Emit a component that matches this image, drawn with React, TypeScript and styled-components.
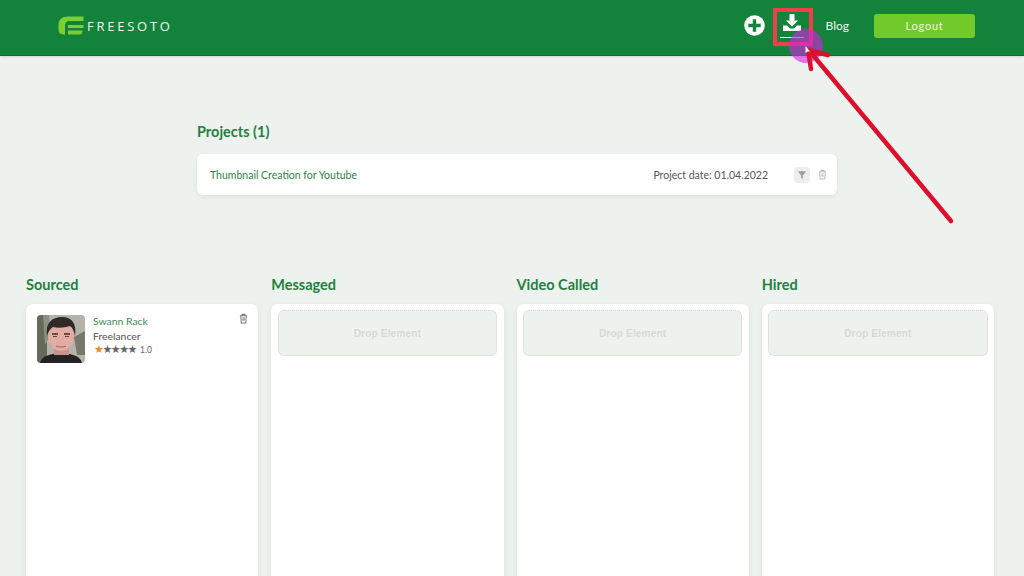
import React from "react";
import styled, { createGlobalStyle } from "styled-components";

const Global = createGlobalStyle`
  html, body { margin: 0; padding: 0; background: #eef2ef; height: 576px; overflow: hidden; }
  body { font-family: Lato, "Open Sans", sans-serif; }
  * { box-sizing: border-box; }
`;
const Page = styled.div`position: relative; width: 1024px; height: 576px; overflow: hidden; background: #eef2ef;`;
const Header = styled.header`
  height: 56px; background: #13823b; border-bottom: 1px solid #0f6f31;
  display: flex; align-items: center; padding: 0 49px 4px 58px;
  box-shadow: 0 1px 2px rgba(0,0,0,.12);
`;
const Brand = styled.div`display: flex; align-items: center; gap: 3px;`;
const BrandName = styled.span`
  color: #f2f7f3; font-family: "Open Sans", Roboto, sans-serif; font-size: 13px; font-weight: 500;
  letter-spacing: 2.75px; line-height: 16px;
`;
const Nav = styled.nav`margin-left: auto; display: flex; align-items: center;`;
const PlusIcon = styled.svg`width: 21px; height: 21px; display: block; margin-right: 10px;`;
const DownloadWrap = styled.div`
  width: 34px; height: 34px; display: flex; flex-direction: column; align-items: center; margin-top: 2px; margin-right: 17px;
`;
const DownloadIcon = styled.svg`width: 20px; height: 20px; display: block; margin-top: 3px;`;
const Underline = styled.div`width: 24px; height: 1px; background: #e8f2ea; margin-top: 4px;`;
const BlogLink = styled.a`color: #eef6f0; font-size: 12px; font-weight: 400; margin-right: 25px;`;
const LogoutButton = styled.button`
  width: 101px; height: 24px; border: 0; border-radius: 3px; background: #72c92a; color: #eef7df;
  font: 400 11px Lato, sans-serif; letter-spacing: .8px; padding: 0;
`;
const Projects = styled.section`width: 640px; margin: 66px 0 0 197px;`;
const SectionTitle = styled.h2`margin: 0; color: #1f8140; font-size: 14.5px; font-weight: 700; line-height: 20px;`;
const ProjectCard = styled.div`
  margin-top: 12px; height: 41px; background: #fff; border-radius: 6px; padding: 0 9px 0 13px;
  display: flex; align-items: center; box-shadow: 0 2px 5px rgba(0,0,0,.07);
`;
const ProjectName = styled.span`color: #2f7f49; font-size: 10.5px;`;
const ProjectDate = styled.span`margin-left: auto; color: #555; font-size: 10.5px; margin-right: 26px;`;
const FilterButton = styled.div`
  width: 16px; height: 16px; border-radius: 4px; background: #eceeed; display: flex; align-items: center; justify-content: center; margin-right: 7px;
`;
const SmallIcon = styled.svg`width: 10px; height: 10px; display: block;`;
const TrashIcon = styled.svg<{ $size: number }>`width: ${p => p.$size}px; height: ${p => p.$size}px; display: block;`;
const Board = styled.div`
  display: grid; grid-template-columns: repeat(4, 232.25px); column-gap: 13px; margin: 80px 0 0 26px;
`;
const Column = styled.div`display: flex; flex-direction: column;`;
const ColumnCard = styled.div`
  margin-top: 9px; height: 320px; background: #fff; border-radius: 7px; padding: 6px 6.5px;
  box-shadow: 0 2px 6px rgba(0,0,0,.07);
`;
const DropZone = styled.div`
  height: 46px; background: #eef2ef; border: 1px dotted #cfd5d1; border-radius: 6px; display: flex; align-items: center; justify-content: center;
  color: #d5dad7; font: 700 10.2px "Liberation Sans", Arial, sans-serif; letter-spacing: .1px;
`;
const Person = styled.div`position: relative; display: flex; padding: 5px 0 0 4.5px; gap: 8px;`;
const PhotoSvg = styled.svg`width: 48px; height: 48px; border-radius: 4px; display: block; flex: none;`;
const PersonText = styled.div`display: flex; flex-direction: column;`;
const PersonName = styled.span`color: #3f8b58; font-size: 10.4px; line-height: 13px;`;
const PersonRole = styled.span`color: #555; font-size: 10.4px; line-height: 13px; margin-top: 2px;`;
const Rating = styled.div`display: flex; align-items: center; margin-top: 2px; margin-left: 1px;`;
const Star = styled.span<{ $on?: boolean }>`color: ${p => (p.$on ? "#ef8a1e" : "#666")}; font: 11px/10px "DejaVu Sans", sans-serif; width: 8.4px; text-align: center;`;
const RatingValue = styled.span`color: #666; font-size: 8.5px; margin-left: 4px;`;
const PersonTrash = styled.div`position: absolute; top: 3px; right: 3px;`;
const Highlight = styled.div`position: absolute; left: 773px; top: 8px; width: 40px; height: 38px; border: 4px solid #ee4048;`;
const Overlay = styled.svg`position: absolute; left: 0; top: 0; width: 1024px; height: 576px; pointer-events: none;`;

const Trash = ({ size, color }: { size: number; color: string }) => (
  <TrashIcon $size={size} viewBox="0 0 24 24" fill="none" stroke={color} strokeWidth="2.2">
    <path d="M4 6h16M9 6V3h6v3M6 6l1 16h10l1-16" />
    <path d="M9 11h6M9 15h6" />
  </TrashIcon>
);

const columns = ["Messaged", "Video Called", "Hired"];

export default function App() {
  return (
    <Page>
      <Global />
      <Header>
        <Brand>
          <svg width="26" height="19" viewBox="0 0 26 19" fill="none">
            <path d="M25.5 0.5H10C4 0.5 0.5 3.5 0.5 9v5c0 3 2 4.5 6.5 4.5V10C7 7 8.5 5 11 5h14.5z" fill="#7ad02f" />
            <path d="M10 9h15.5v3H10zM10 14.5h14.5c0 2.5-1 4-3 4H10z" fill="#7ad02f" />
          </svg>
          <BrandName>FREESOTO</BrandName>
        </Brand>
        <Nav>
          <PlusIcon viewBox="0 0 22 22">
            <circle cx="11" cy="11" r="10.8" fill="#fff" />
            <path d="M11 4.5v13M4.5 11h13" stroke="#13823b" strokeWidth="3.6" />
          </PlusIcon>
          <DownloadWrap>
            <DownloadIcon viewBox="0 0 20 20" fill="#fff">
              <path d="M7.5 1h5v6.5h3.5L10 13.5 4 7.5h3.5z" />
              <path d="M1 12.5h4l3 3h4l3-3h4V18H1z" />
            </DownloadIcon>
            <Underline />
          </DownloadWrap>
          <BlogLink>Blog</BlogLink>
          <LogoutButton>Logout</LogoutButton>
        </Nav>
      </Header>
      <Projects>
        <SectionTitle>Projects (1)</SectionTitle>
        <ProjectCard>
          <ProjectName>Thumbnail Creation for Youtube</ProjectName>
          <ProjectDate>Project date: 01.04.2022</ProjectDate>
          <FilterButton>
            <SmallIcon viewBox="0 0 24 24" fill="#9aa09c"><path d="M2 3h20l-8 10v8l-4-2v-6z" /></SmallIcon>
          </FilterButton>
          <Trash size={11} color="#b9bebb" />
        </ProjectCard>
      </Projects>
      <Board>
        <Column>
          <SectionTitle>Sourced</SectionTitle>
          <ColumnCard>
            <Person>
              <PhotoSvg viewBox="0 0 48 48">
                <rect width="48" height="48" fill="#b4b2a9" />
                <rect width="10" height="48" fill="#666a5c" />
                <path d="M6 0l6 0 2 20-6 10z" fill="#8d9080" />
                <path d="M37 22l11-6v24H40z" fill="#77786b" />
                <path d="M3 48c2-8 11-9 21-10 10 1 19 2 21 10z" fill="#242222" />
                <rect x="17" y="27" width="15" height="13" fill="#c8938a" />
                <ellipse cx="24" cy="21" rx="13" ry="15" fill="#e0aca3" />
                <path d="M10 21C8 8 15 2 25 2c10 0 15 7 13 19-1-5-2-8-5-10-6 2-12 2-17 1-3 2-5 5-6 9z" fill="#2f2a28" />
                <path d="M15 19h6M27 19h6" stroke="#3c2e2a" strokeWidth="1.4" />
                <path d="M16 21.5h4M28 21.5h4" stroke="#5a4540" strokeWidth="1.2" />
                <path d="M19 31q5 2 10 0" stroke="#a8645e" strokeWidth="1.2" fill="none" />
              </PhotoSvg>
              <PersonText>
                <PersonName>Swann Rack</PersonName>
                <PersonRole>Freelancer</PersonRole>
                <Rating>
                  <Star $on>★</Star><Star>★</Star><Star>★</Star><Star>★</Star><Star>★</Star>
                  <RatingValue>1.0</RatingValue>
                </Rating>
              </PersonText>
              <PersonTrash><Trash size={11} color="#777" /></PersonTrash>
            </Person>
          </ColumnCard>
        </Column>
        {columns.map(c => (
          <Column key={c}>
            <SectionTitle>{c}</SectionTitle>
            <ColumnCard><DropZone>Drop Element</DropZone></ColumnCard>
          </Column>
        ))}
      </Board>
      <Highlight />
      <Overlay viewBox="0 0 1024 576">
        <circle cx="806" cy="46" r="17" fill="#d81fe8" opacity=".6" />
        <path d="M951 221L812 54" stroke="#dc0f2c" strokeWidth="4.5" strokeLinecap="round" />
        <path d="M808 50l20 5M808 50l3 19" stroke="#dc0f2c" strokeWidth="4.5" strokeLinecap="round" />
        <path d="M805.5 46v7l2-1.5 2.5 0z" fill="#fff" />
      </Overlay>
    </Page>
  );
}
